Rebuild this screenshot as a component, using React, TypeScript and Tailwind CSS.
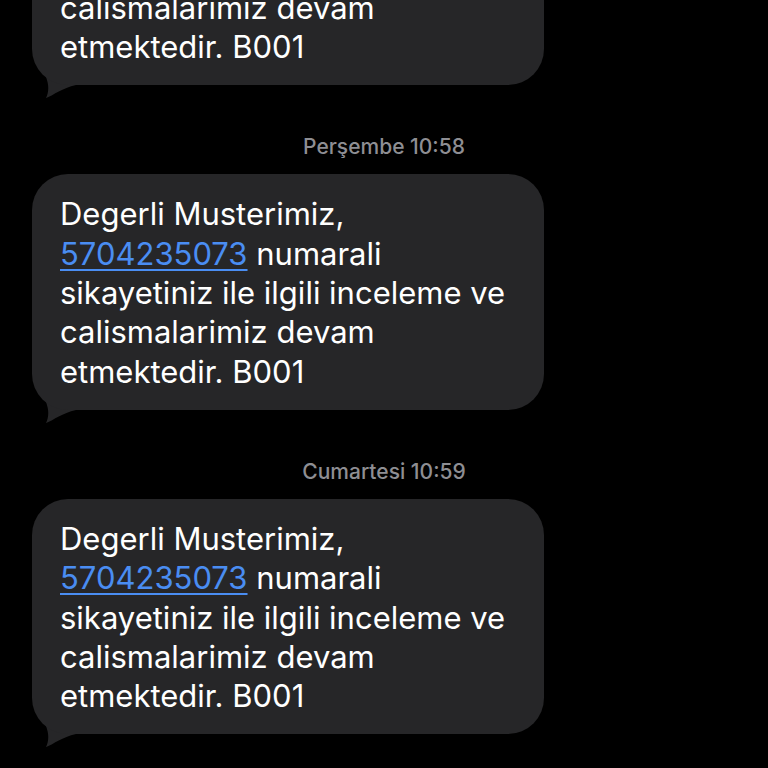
import React from 'react';

const Tail = () => (
  <svg
    className="absolute left-0 bottom-[-16px]"
    width="48"
    height="40"
    viewBox="0 0 48 40"
  >
    <path d="M20 0 L14 16 C17 24 17 31 14 37 C22 34 30 27 44 24 L44 0 Z" fill="#262628" />
  </svg>
);

const Bubble = () => (
  <div className="relative w-[512px] ml-[32px]">
    <div className="relative z-10 rounded-[36px] bg-[#262628] pl-[28px] pr-[16px] pt-[20px] pb-[19px] text-[31px] leading-[39.3px] text-white">
      <p>Degerli Musterimiz,</p>
      <p>
        <span className="text-[#4a8df2] underline decoration-[2px] underline-offset-[4px]">5704235073</span> numarali
      </p>
      <p>sikayetiniz ile ilgili inceleme ve</p>
      <p>calismalarimiz devam</p>
      <p>etmektedir. B001</p>
    </div>
    <Tail />
  </div>
);

const Stamp = ({ day, time }: { day: string; time: string }) => (
  <div className="flex justify-center h-[89px] pt-[50px] text-[21px] leading-[24px] text-[#8e8e93] font-medium">
    <span>
      {day} {time}
    </span>
  </div>
);

export default function App() {
  return (
    <div
      className="w-[768px] h-[768px] overflow-hidden bg-black"
      style={{ fontFamily: 'Inter, "Noto Sans", sans-serif' }}
    >
      <div className="-mt-[150px] flex flex-col">
        <Bubble />
        <Stamp day="Perşembe" time="10:58" />
        <Bubble />
        <Stamp day="Cumartesi" time="10:59" />
        <Bubble />
      </div>
    </div>
  );
}
